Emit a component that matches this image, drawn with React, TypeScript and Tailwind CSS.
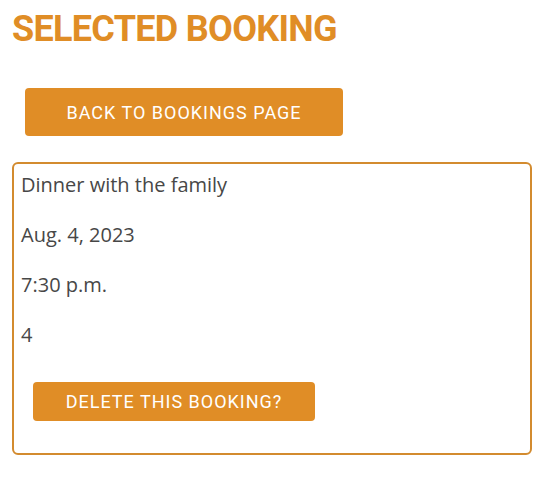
const rows = ['Dinner with the family', 'Aug. 4, 2023', '7:30 p.m.', '4']

const btn =
  "rounded-[4px] bg-[#e08d26] text-white text-[18px] font-normal tracking-[1px] font-['Roboto',sans-serif]"

export default function App() {
  return (
    <div className="min-h-screen bg-white px-3 pt-[5px] font-['Open_Sans',sans-serif]">
      <h1 className="text-[36px] leading-[48px] font-bold tracking-[-0.7px] text-[#e08d26] font-['Roboto',sans-serif]">
        SELECTED BOOKING
      </h1>

      <div className="mt-[35px] ml-[13px]">
        <button className={`${btn} w-[318px] h-[48px]`}>BACK TO BOOKINGS PAGE</button>
      </div>

      <div className="mt-[26px] w-[520px] h-[293px] rounded-[6px] border-2 border-[#d38b2f] px-[7px] pt-[8px]">
        {rows.map(r => (
          <p key={r} className="mb-[24px] text-[20px] leading-[26px] text-[#474747]">{r}</p>
        ))}
        <button className={`${btn} ml-[12px] mt-[10px] w-[282px] h-[39px]`}>DELETE THIS BOOKING?</button>
      </div>
    </div>
  )
}
